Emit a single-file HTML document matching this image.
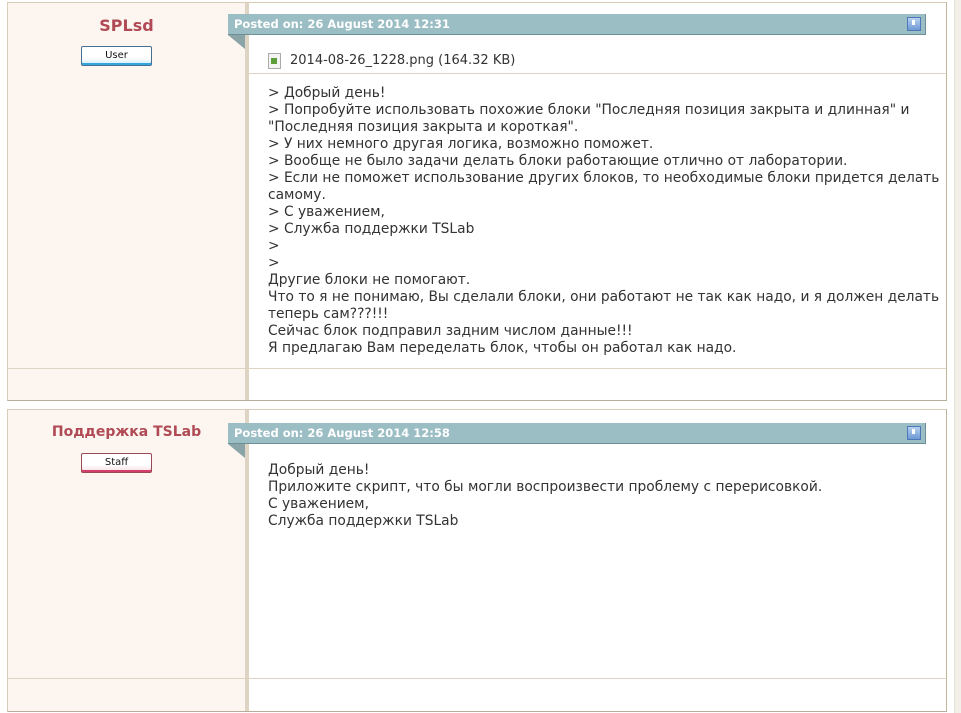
<!DOCTYPE html>
<html><head><meta charset="utf-8"><style>
body{margin:0;width:961px;height:713px;background:#fff;position:relative;overflow:hidden;font-family:"DejaVu Sans","Liberation Sans",sans-serif;}
.sb{position:absolute;left:954px;top:0;width:7px;height:713px;background:#f3f0ea;border-left:1px solid #e6e2da}
.post{position:absolute;left:7px;width:938px;border:1px solid #d8cbb8;border-bottom-color:#b8ad9c;border-right-color:#c0b49a;background:#fff}
.left{position:absolute;left:0;top:0;width:237px;bottom:0;background:#fdf5ef;border-right:4px solid #ddd4c4}
.name{position:absolute;left:0;width:237px;text-align:center;font-weight:bold;font-size:15px;color:#b04a55}
.badge{position:absolute;left:73px;width:69px;height:18px;border:1px solid #555;border-radius:2px;background:linear-gradient(#fff,#f7efe7);font-size:10px;text-align:center;line-height:17px;color:#111}
.bar{position:absolute;left:220px;width:698px;height:21px;background:#9bbdc4;border:1px solid #6d8f98;border-left:none;border-top:none;color:#fff;font-weight:bold;font-size:11.5px;line-height:21px;padding-left:6px;box-sizing:border-box}
.fold{position:absolute;left:220px;width:0;height:0;border-top:14px solid #8aa4a8;border-left:17px solid transparent}
.ic{position:absolute;right:4px;top:3px;width:12px;height:12px;background:linear-gradient(#b6d0f0,#6e9ad4);border:1px solid #4e78b8}
.ic:after{content:"";position:absolute;left:4px;top:2px;width:3px;height:5px;background:#fff}
.txt{position:absolute;left:260px;font-size:13.8px;line-height:17px;color:#333;white-space:nowrap}
.hl{position:absolute;left:241px;right:0;height:1px;background:#ddd4c4}
</style></head><body>
<div class="sb"></div>

<div class="post" style="top:2px;height:397px">
 <div class="left"></div>
 <div class="name" style="top:13px;font-size:16px">SPLsd</div>
 <div class="badge" style="top:43px;border-color:#4a6f95;background:linear-gradient(#fff 60%,#cfeaf8);box-shadow:inset 0 -2px 0 #33a6dc">User</div>
 <div class="bar" style="top:11px">Posted on: 26 August 2014 12:31<div class="ic"></div></div>
 <div class="fold" style="top:32px"></div>
 <div style="position:absolute;left:260px;top:50px;width:11px;height:14px;border:1px solid #aaa;background:#f4f4f4"><div style="position:absolute;left:2px;top:4px;width:6px;height:6px;background:#5b9e3a"></div></div>
 <div class="txt" style="top:49px;left:282px;font-size:13px">2014-08-26_1228.png (164.32 KB)</div>
 <div class="hl" style="top:70px"></div>
 <div class="txt" style="top:82px">&gt; Добрый день!<br>&gt; Попробуйте использовать похожие блоки "Последняя позиция закрыта и длинная" и<br>"Последняя позиция закрыта и короткая".<br>&gt; У них немного другая логика, возможно поможет.<br>&gt; Вообще не было задачи делать блоки работающие отлично от лаборатории.<br>&gt; Если не поможет использование других блоков, то необходимые блоки придется делать<br>самому.<br>&gt; С уважением,<br>&gt; Служба поддержки TSLab<br>&gt;<br>&gt;<br>Другие блоки не помогают.<br>Что то я не понимаю, Вы сделали блоки, они работают не так как надо, и я должен делать<br>теперь сам???!!!<br>Сейчас блок подправил задним числом данные!!!<br>Я предлагаю Вам переделать блок, чтобы он работал как надо.</div>
 <div style="position:absolute;left:0;right:0;top:365px;height:1px;background:#ddd4c4"></div>
</div>

<div class="post" style="top:409px;height:301px">
 <div class="left"></div>
 <div class="name" style="top:14px;font-size:14px">Поддержка TSLab</div>
 <div class="badge" style="top:43px;border-color:#9a4a55;background:linear-gradient(#fff 60%,#f8dde2);box-shadow:inset 0 -2px 0 #d0406a">Staff</div>
 <div class="bar" style="top:13px">Posted on: 26 August 2014 12:58<div class="ic"></div></div>
 <div class="fold" style="top:34px"></div>
 <div class="txt" style="top:52px">Добрый день!<br>Приложите скрипт, что бы могли воспроизвести проблему с перерисовкой.<br>С уважением,<br>Служба поддержки TSLab</div>
 <div style="position:absolute;left:0;right:0;top:268px;height:1px;background:#ddd4c4"></div>
</div>
</body></html>
